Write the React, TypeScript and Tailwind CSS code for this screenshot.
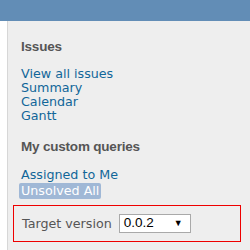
export default function App() {
  const links = ["View all issues", "Summary", "Calendar", "Gantt"];

  return (
    <div className="flex h-[250px] w-[250px] flex-col overflow-hidden bg-white">
      <div className="h-[21px] shrink-0 bg-[#628db6]" />
      <div className="flex flex-1">
        <div className="w-[7px] shrink-0 bg-white" />
        <div className="flex-1 border-l border-[#d7d7d7] bg-[#eeeeee] pl-[13px] pr-[9px] font-['DejaVu_Sans',sans-serif]">
          <h3 className="mt-[17px] font-['Liberation_Sans',sans-serif] text-[13.5px] font-bold leading-[17px] tracking-[-0.2px] text-[#555]">
            Issues
          </h3>
          <div className="mt-[12px] flex flex-col text-[12.7px] leading-[14px] text-[#116699]">
            {links.map((l) => (
              <a key={l} href="#" className="self-start">
                {l}
              </a>
            ))}
          </div>
          <h3 className="mt-[15px] font-['Liberation_Sans',sans-serif] text-[13.5px] font-bold leading-[17px] tracking-[-0.2px] text-[#555]">
            My custom queries
          </h3>
          <div className="mt-[13px] flex flex-col text-[12.7px] leading-[14px] text-[#116699]">
            <a href="#" className="self-start">
              Assigned to Me
            </a>
            <a
              href="#"
              className="-ml-[2px] mt-[1px] self-start rounded-[2px] bg-[#a0b8d6] px-[2px] py-[1px] text-white"
            >
              Unsolved All
            </a>
          </div>
          <div className="-ml-[8px] mt-[6px] flex h-[37px] items-center border border-[#ee0000] pl-[8px]">
            <span className="text-[12.7px] text-[#555]">Target version</span>
            <div className="ml-[7px] flex h-[19px] w-[72px] items-center justify-between border border-[#a9a9a9] bg-white pl-[4px] pr-[7px] font-['Liberation_Sans',sans-serif] text-[13.5px] text-black">
              <span>0.0.2</span>
              <span className="text-[9px]">▼</span>
            </div>
          </div>
        </div>
      </div>
    </div>
  );
}
